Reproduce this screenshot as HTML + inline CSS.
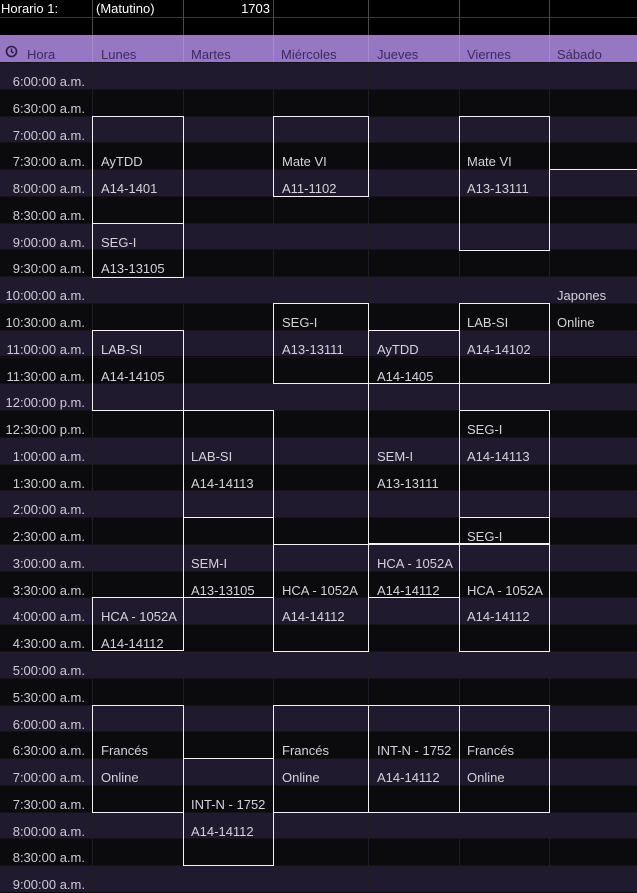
<!DOCTYPE html>
<html><head><meta charset="utf-8"><style>
*{margin:0;padding:0;box-sizing:border-box}
body{width:637px;height:892px;background:#0b0b0d;position:relative;overflow:hidden;font-family:"Liberation Sans",sans-serif;font-size:13px}
.a{position:absolute}
.r{position:absolute;left:0;width:637px;height:26.77px;border-top:1px solid #141318}
.p{background:#201a2e}
.k{background:#0b0b0d}
.v{position:absolute;top:62px;height:830px;width:1px;background:#1e1c24}
.t{position:absolute;left:0;width:85px;text-align:right;color:#cfcbd6;line-height:16px;margin-top:2px}
.c{position:absolute;color:#d6d2dc;line-height:16px;margin-top:2px}
.b{position:absolute;border:1.5px solid #f2f2f2}
.h{position:absolute;top:47px;color:#3b2b5a;font-size:13px;line-height:16px}
.g{position:absolute;width:1px;background:#4a4a4a}
</style></head><body>
<div class="a" style="left:0;top:0;width:637px;height:35px;background:#000"></div>
<div class="a" style="left:0;top:17px;width:637px;height:1px;background:#3a3a3a"></div>
<div class="g" style="left:92px;top:0;height:35px"></div>
<div class="g" style="left:183px;top:0;height:35px"></div>
<div class="g" style="left:273px;top:0;height:35px"></div>
<div class="g" style="left:368px;top:0;height:35px"></div>
<div class="g" style="left:459px;top:0;height:35px"></div>
<div class="g" style="left:549px;top:0;height:35px"></div>
<div class="a" style="left:1px;top:2px;color:#fff;line-height:14px">Horario 1:</div>
<div class="a" style="left:96px;top:2px;color:#fff;line-height:14px">(Matutino)</div>
<div class="a" style="left:183px;width:87px;text-align:right;top:2px;color:#fff;line-height:14px">1703</div>
<div class="a" style="left:0;top:35px;width:637px;height:27px;background:#9678c2"></div>
<div class="g" style="left:92px;top:35px;height:27px;background:#a58bcb"></div>
<div class="g" style="left:183px;top:35px;height:27px;background:#a58bcb"></div>
<div class="g" style="left:273px;top:35px;height:27px;background:#a58bcb"></div>
<div class="g" style="left:368px;top:35px;height:27px;background:#a58bcb"></div>
<div class="g" style="left:459px;top:35px;height:27px;background:#a58bcb"></div>
<div class="g" style="left:549px;top:35px;height:27px;background:#a58bcb"></div>
<svg class="a" style="left:5px;top:45px" width="13" height="13" viewBox="0 0 13 13"><circle cx="6.5" cy="6.5" r="5" fill="none" stroke="#2a1e45" stroke-width="1.6"/><path d="M6.5 3.5V6.7L8.6 8" fill="none" stroke="#2a1e45" stroke-width="1.4"/></svg>
<div class="h" style="left:27px">Hora</div>
<div class="h" style="left:101px">Lunes</div>
<div class="h" style="left:191px">Martes</div>
<div class="h" style="left:281px">Miércoles</div>
<div class="h" style="left:377px">Jueves</div>
<div class="h" style="left:467px">Viernes</div>
<div class="h" style="left:557px">Sábado</div>

<div class="r p" style="top:62px"></div><div class="r k" style="top:88.8px"></div>
<div class="r p" style="top:115.5px"></div><div class="r k" style="top:142.3px"></div>
<div class="r p" style="top:169.1px"></div><div class="r k" style="top:195.9px"></div>
<div class="r p" style="top:222.6px"></div><div class="r k" style="top:249.4px"></div>
<div class="r p" style="top:276.2px"></div><div class="r k" style="top:302.9px"></div>
<div class="r p" style="top:329.7px"></div><div class="r k" style="top:356.5px"></div>
<div class="r p" style="top:383.2px"></div><div class="r k" style="top:410px"></div>
<div class="r p" style="top:436.8px"></div><div class="r k" style="top:463.6px"></div>
<div class="r p" style="top:490.3px"></div><div class="r k" style="top:517.1px"></div>
<div class="r p" style="top:543.9px"></div><div class="r k" style="top:570.6px"></div>
<div class="r p" style="top:597.4px"></div><div class="r k" style="top:624.2px"></div>
<div class="r p" style="top:650.9px"></div><div class="r k" style="top:677.7px"></div>
<div class="r p" style="top:704.5px"></div><div class="r k" style="top:731.3px"></div>
<div class="r p" style="top:758px"></div><div class="r k" style="top:784.8px"></div>
<div class="r p" style="top:811.6px"></div><div class="r k" style="top:838.3px"></div>
<div class="r p" style="top:865.1px"></div>

<div class="v" style="left:92px"></div><div class="v" style="left:183px"></div><div class="v" style="left:273px"></div><div class="v" style="left:368px"></div><div class="v" style="left:459px"></div><div class="v" style="left:549px"></div>

<div class="t" style="top:72px">6:00:00 a.m.</div>
<div class="t" style="top:98.8px">6:30:00 a.m.</div>
<div class="t" style="top:125.5px">7:00:00 a.m.</div>
<div class="t" style="top:152.3px">7:30:00 a.m.</div>
<div class="t" style="top:179.1px">8:00:00 a.m.</div>
<div class="t" style="top:205.9px">8:30:00 a.m.</div>
<div class="t" style="top:232.6px">9:00:00 a.m.</div>
<div class="t" style="top:259.4px">9:30:00 a.m.</div>
<div class="t" style="top:286.2px">10:00:00 a.m.</div>
<div class="t" style="top:312.9px">10:30:00 a.m.</div>
<div class="t" style="top:339.7px">11:00:00 a.m.</div>
<div class="t" style="top:366.5px">11:30:00 a.m.</div>
<div class="t" style="top:393.2px">12:00:00 p.m.</div>
<div class="t" style="top:420px">12:30:00 p.m.</div>
<div class="t" style="top:446.8px">1:00:00 a.m.</div>
<div class="t" style="top:473.6px">1:30:00 a.m.</div>
<div class="t" style="top:500.3px">2:00:00 a.m.</div>
<div class="t" style="top:527.1px">2:30:00 a.m.</div>
<div class="t" style="top:553.9px">3:00:00 a.m.</div>
<div class="t" style="top:580.6px">3:30:00 a.m.</div>
<div class="t" style="top:607.4px">4:00:00 a.m.</div>
<div class="t" style="top:634.2px">4:30:00 a.m.</div>
<div class="t" style="top:660.9px">5:00:00 a.m.</div>
<div class="t" style="top:687.7px">5:30:00 a.m.</div>
<div class="t" style="top:714.5px">6:00:00 a.m.</div>
<div class="t" style="top:741.3px">6:30:00 a.m.</div>
<div class="t" style="top:768px">7:00:00 a.m.</div>
<div class="t" style="top:794.8px">7:30:00 a.m.</div>
<div class="t" style="top:821.6px">8:00:00 a.m.</div>
<div class="t" style="top:848.3px">8:30:00 a.m.</div>
<div class="t" style="top:875.1px">9:00:00 a.m.</div>

<div class="b" style="left:92px;top:115.5px;width:92px;height:108px"></div>
<div class="b" style="left:92px;top:222.6px;width:92px;height:55px"></div>
<div class="b" style="left:92px;top:329.7px;width:92px;height:81px"></div>
<div class="b" style="left:92px;top:597.4px;width:92px;height:54px"></div>
<div class="b" style="left:92px;top:704.5px;width:92px;height:108px"></div>
<div class="b" style="left:183px;top:410px;width:91px;height:108px"></div>
<div class="b" style="left:183px;top:517.1px;width:91px;height:81px"></div>
<div class="b" style="left:183px;top:758px;width:91px;height:108px"></div>
<div class="b" style="left:273px;top:115.5px;width:96px;height:81px"></div>
<div class="b" style="left:273px;top:302.9px;width:96px;height:81px"></div>
<div class="b" style="left:273px;top:543.9px;width:96px;height:108px"></div>
<div class="b" style="left:273px;top:704.5px;width:96px;height:108px"></div>
<div class="b" style="left:368px;top:329.7px;width:92px;height:54px"></div>
<div class="b" style="left:368px;top:383.2px;width:92px;height:161px"></div>
<div class="b" style="left:368px;top:543.9px;width:92px;height:54px"></div>
<div class="b" style="left:368px;top:704.5px;width:92px;height:108px"></div>
<div class="b" style="left:459px;top:115.5px;width:91px;height:135px"></div>
<div class="b" style="left:459px;top:302.9px;width:91px;height:81px"></div>
<div class="b" style="left:459px;top:410px;width:91px;height:108px"></div>
<div class="b" style="left:459px;top:517.1px;width:91px;height:27px"></div>
<div class="b" style="left:459px;top:543.9px;width:91px;height:108px"></div>
<div class="b" style="left:459px;top:704.5px;width:91px;height:108px"></div>
<div class="a" style="left:549px;top:168.5px;width:88px;height:1.5px;background:#f2f2f2"></div>

<div class="c" style="left:101px;top:152.3px">AyTDD</div>
<div class="c" style="left:101px;top:179.1px">A14-1401</div>
<div class="c" style="left:101px;top:232.6px">SEG-I</div>
<div class="c" style="left:101px;top:259.4px">A13-13105</div>
<div class="c" style="left:101px;top:339.7px">LAB-SI</div>
<div class="c" style="left:101px;top:366.5px">A14-14105</div>
<div class="c" style="left:101px;top:607.4px">HCA - 1052A</div>
<div class="c" style="left:101px;top:634.2px">A14-14112</div>
<div class="c" style="left:101px;top:741.3px">Francés</div>
<div class="c" style="left:101px;top:768px">Online</div>

<div class="c" style="left:191px;top:446.8px">LAB-SI</div>
<div class="c" style="left:191px;top:473.6px">A14-14113</div>
<div class="c" style="left:191px;top:553.9px">SEM-I</div>
<div class="c" style="left:191px;top:580.6px">A13-13105</div>
<div class="c" style="left:191px;top:794.8px">INT-N - 1752</div>
<div class="c" style="left:191px;top:821.6px">A14-14112</div>

<div class="c" style="left:282px;top:152.3px">Mate VI</div>
<div class="c" style="left:282px;top:179.1px">A11-1102</div>
<div class="c" style="left:282px;top:312.9px">SEG-I</div>
<div class="c" style="left:282px;top:339.7px">A13-13111</div>
<div class="c" style="left:282px;top:580.6px">HCA - 1052A</div>
<div class="c" style="left:282px;top:607.4px">A14-14112</div>
<div class="c" style="left:282px;top:741.3px">Francés</div>
<div class="c" style="left:282px;top:768px">Online</div>

<div class="c" style="left:377px;top:339.7px">AyTDD</div>
<div class="c" style="left:377px;top:366.5px">A14-1405</div>
<div class="c" style="left:377px;top:446.8px">SEM-I</div>
<div class="c" style="left:377px;top:473.6px">A13-13111</div>
<div class="c" style="left:377px;top:553.9px">HCA - 1052A</div>
<div class="c" style="left:377px;top:580.6px">A14-14112</div>
<div class="c" style="left:377px;top:741.3px">INT-N - 1752</div>
<div class="c" style="left:377px;top:768px">A14-14112</div>

<div class="c" style="left:467px;top:152.3px">Mate VI</div>
<div class="c" style="left:467px;top:179.1px">A13-13111</div>
<div class="c" style="left:467px;top:312.9px">LAB-SI</div>
<div class="c" style="left:467px;top:339.7px">A14-14102</div>
<div class="c" style="left:467px;top:420px">SEG-I</div>
<div class="c" style="left:467px;top:446.8px">A14-14113</div>
<div class="c" style="left:467px;top:527.1px">SEG-I</div>
<div class="c" style="left:467px;top:580.6px">HCA - 1052A</div>
<div class="c" style="left:467px;top:607.4px">A14-14112</div>
<div class="c" style="left:467px;top:741.3px">Francés</div>
<div class="c" style="left:467px;top:768px">Online</div>

<div class="c" style="left:557px;top:286.2px">Japones</div>
<div class="c" style="left:557px;top:312.9px">Online</div>
</body></html>
